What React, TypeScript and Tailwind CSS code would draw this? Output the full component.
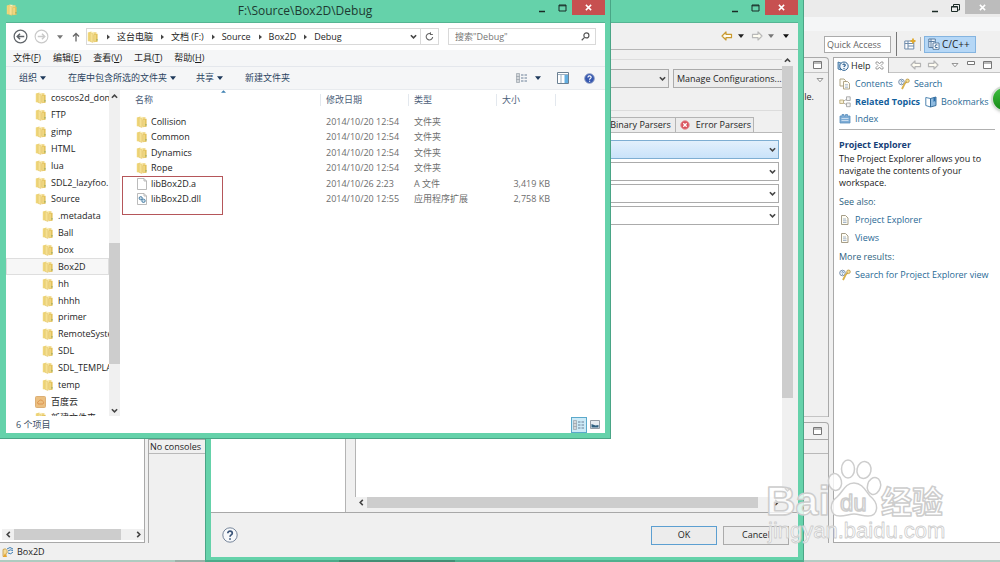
import type { ReactNode } from 'react';
import clsx from 'clsx';

type TreeItem = { name: string; level: 0 | 1; kind?: 'cloud' };
type FileRow = { name: string; date: string; type: string; size?: string; kind: 'folder' | 'file' | 'dll' };

const tree: TreeItem[] = [
  { name: 'coscos2d_don', level: 0 },
  { name: 'FTP', level: 0 },
  { name: 'gimp', level: 0 },
  { name: 'HTML', level: 0 },
  { name: 'lua', level: 0 },
  { name: 'SDL2_lazyfoo.', level: 0 },
  { name: 'Source', level: 0 },
  { name: '.metadata', level: 1 },
  { name: 'Ball', level: 1 },
  { name: 'box', level: 1 },
  { name: 'Box2D', level: 1 },
  { name: 'hh', level: 1 },
  { name: 'hhhh', level: 1 },
  { name: 'primer', level: 1 },
  { name: 'RemoteSyste', level: 1 },
  { name: 'SDL', level: 1 },
  { name: 'SDL_TEMPLA', level: 1 },
  { name: 'temp', level: 1 },
  { name: '百度云', level: 0, kind: 'cloud' },
  { name: '新建文件夹', level: 0 },
];

const files: FileRow[] = [
  { name: 'Collision', date: '2014/10/20 12:54', type: '文件夹', kind: 'folder' },
  { name: 'Common', date: '2014/10/20 12:54', type: '文件夹', kind: 'folder' },
  { name: 'Dynamics', date: '2014/10/20 12:54', type: '文件夹', kind: 'folder' },
  { name: 'Rope', date: '2014/10/20 12:54', type: '文件夹', kind: 'folder' },
  { name: 'libBox2D.a', date: '2014/10/26 2:23', type: 'A 文件', size: '3,419 KB', kind: 'file' },
  { name: 'libBox2D.dll', date: '2014/10/20 12:55', type: '应用程序扩展', size: '2,758 KB', kind: 'dll' },
];

const menus = [
  ['文件', 'F'],
  ['编辑', 'E'],
  ['查看', 'V'],
  ['工具', 'T'],
  ['帮助', 'H'],
];

const crumbs = ['这台电脑', '文档 (F:)', 'Source', 'Box2D', 'Debug'];

/* ---------- icons ---------- */

const Folder = () => (
  <svg viewBox="0 0 12 12" className="h-3 w-3 shrink-0">
    <path d="M.8 1.500L4.500.5v10L.8 10.300z" fill="#f0d67a" />
    <path d="M3.500.8h3.200v9.700H3.500z" fill="#fdf3c0" />
    <path d="M6.500 1.200h3v9H6.500z" fill="#efd580" />
    <path d="M3.200 1.500L5.800 2.500v9L3.200 10.500z" fill="#f6e093" stroke="#d8b950" strokeWidth=".4" />
    <path d="M6.500 3.500L10.600 2.800v8L6.500 11.300z" fill="#e3c25c" />
    <path d="M7.300 4l1.500-.3v6.800l-1.500.2z" fill="#f2dc8c" />
    <path d="M10 8v1.500" stroke="#7fa56a" strokeWidth=".9" />
  </svg>
);

const CloudFolder = () => (
  <svg viewBox="0 0 12 12" className="h-3 w-3 shrink-0">
    <rect x=".5" y=".5" width="10" height="11" rx="1" fill="#ebbf80" stroke="#dcaf75" />
    <path d="M3 8a2 2 0 0 1 1-3 2 2 0 0 1 3.500 0A1.800 1.800 0 0 1 8 8z" fill="none" stroke="#d98c45" strokeWidth=".8" />
  </svg>
);

const Sheet = ({ gears }: { gears?: boolean }) => (
  <svg viewBox="0 0 12 12" className="h-3 w-3 shrink-0">
    <path d="M1.500.5h6.500l2.500 2.500v8.500h-9z" fill="#fff" stroke="#a9a9a9" strokeWidth=".8" />
    <path d="M8 .5v2.500h2.500" fill="none" stroke="#a9a9a9" strokeWidth=".8" />
    {gears && (
      <g fill="#c7dcea" stroke="#4b7fa5" strokeWidth="1">
        <circle cx="4.700" cy="5.200" r="1.600" />
        <circle cx="7.500" cy="7.800" r="1.700" />
      </g>
    )}
  </svg>
);

const Triangle = ({ className }: { className?: string }) => (
  <svg viewBox="0 0 8 5" className={clsx('h-[4px] w-[6px] shrink-0', className)}>
    <path d="M0 0h8L4 5z" fill="currentColor" />
  </svg>
);

const OpenTriangle = () => (
  <svg viewBox="0 0 9 6" className="h-[5px] w-2 shrink-0">
    <path d="M1 .5h7L4.500 4.500z" fill="#fff" stroke="#777" />
  </svg>
);

const Chevron = ({ dir }: { dir: 'up' | 'down' | 'left' | 'right' }) => (
  <svg viewBox="0 0 8 8" className="h-[7px] w-[7px] shrink-0" fill="none" stroke="#444" strokeWidth="1.800">
    {dir === 'up' && <path d="M1 5.500l3-3 3 3" />}
    {dir === 'down' && <path d="M1 2.500l3 3 3-3" />}
    {dir === 'left' && <path d="M5.500 1l-3 3 3 3" />}
    {dir === 'right' && <path d="M2.500 1l3 3-3 3" />}
  </svg>
);

const BlockArrow = ({ color, flip }: { color: string; flip?: boolean }) => (
  <svg viewBox="0 0 12 10" className={clsx('h-[10px] w-3 shrink-0', flip && '-scale-x-100')}>
    <path d="M1 5l4-4v2.300h5.500v3.400H5V9z" fill="#fffdf2" stroke={color} strokeWidth="1.200" strokeLinejoin="round" />
  </svg>
);

const Maximize = () => (
  <svg viewBox="0 0 9 8" className="h-2 w-[9px] shrink-0">
    <path d="M.5.5h8v7h-8zM.5 2h8" fill="#fff" stroke="#777" />
  </svg>
);

const Docs = () => (
  <svg viewBox="0 0 12 12" className="h-3 w-3 shrink-0" fill="#fffdf4" stroke="#a89c7c" strokeWidth=".9">
    <path d="M1 1h4l1.500 1.500V8H1z" />
    <path d="M4.500 3.500h4l2 2V11h-6z" />
    <path d="M6 6.500h3M6 8h3M6 9.500h3" stroke="#8fa5c0" strokeWidth=".6" />
  </svg>
);

const Page = () => (
  <svg viewBox="0 0 12 12" className="h-3 w-3 shrink-0" fill="#fffdf4" stroke="#9c937a" strokeWidth=".9">
    <path d="M2.500 1.500h4l2.500 2.500v6.500H2.500z" />
    <path d="M4 5h3M4 6.800h3.500M4 8.500h3.500" stroke="#8fa5c0" strokeWidth=".8" />
  </svg>
);

const SearchHelp = () => (
  <svg viewBox="0 0 12 12" className="h-3 w-3 shrink-0">
    <circle cx="3.500" cy="4" r="2.800" fill="#eef4fa" stroke="#7f95ad" />
    <path d="M2.600 3.200q.9-1.200 1.800 0L3.500 4.400M3.500 5.200v.7" stroke="#3f6f9f" fill="none" strokeWidth=".8" />
    <path d="M10.500 1.500L6.500 6 4 11" fill="none" stroke="#d9b04a" strokeWidth="1.800" />
    <circle cx="9.500" cy="2.800" r="1.800" fill="#f4dd93" stroke="#b08a35" strokeWidth=".7" />
  </svg>
);

const Related = () => (
  <svg viewBox="0 0 12 12" className="h-3 w-3 shrink-0" strokeWidth=".8">
    <path d="M4 5.500L8 3M4 6.500L8 9" stroke="#999" />
    <path d="M.8 4h3.700v3.500H.8z" fill="#f6edd0" stroke="#b5a473" />
    <path d="M7.500.8h3.700v3.700H7.500zM7.500 7h3.700v3.700H7.500z" fill="#f3f3f3" stroke="#9c9c9c" />
  </svg>
);

const Book = () => (
  <svg viewBox="0 0 12 12" className="h-3 w-3 shrink-0" strokeWidth=".9">
    <path d="M.8 1.500L5.500 2.500v8.500L.8 9.500z" fill="#fff" stroke="#3c78a8" />
    <path d="M5.500 2.500L11 1v8.500L5.500 11z" fill="#8fbbe0" stroke="#2f6695" />
    <path d="M8.500 1.500v4.500l1-1 1 1V1.200" fill="#2d6ea8" />
  </svg>
);

const IndexIcon = () => (
  <svg viewBox="0 0 12 12" className="h-3 w-3 shrink-0">
    <path d="M1 3h2V1.500h2V3h1.500V1.500h2V3H11v7H1z" fill="#7fadd6" stroke="#5c8fbc" strokeWidth=".8" />
    <path d="M2.500 5.500h7M2.500 7.500h7" stroke="#dbe9f5" strokeWidth=".8" />
  </svg>
);

const HelpBadge = () => (
  <svg viewBox="0 0 12 12" className="h-3 w-3 shrink-0">
    <path d="M1 2l3 1v7L1 9z" fill="#9fc0dd" stroke="#376c9b" strokeWidth=".8" />
    <circle cx="7" cy="6.200" r="4.200" fill="#f1f6fb" stroke="#2f6494" />
    <path d="M5.700 5q1.300-2 2.600 0c0 1-1.300.9-1.300 2M7 8v.9" fill="none" stroke="#22588a" strokeWidth="1.100" />
  </svg>
);

const Details = () => (
  <svg viewBox="0 0 12 10" className="h-[10px] w-3 shrink-0">
    <path d="M.5.500h3v9h-3z" fill="#d2d6da" stroke="#9aa2aa" strokeWidth=".7" />
    <path d="M.5 3.500h3M.5 6.500h3" stroke="#8c959e" strokeWidth=".6" />
    <path d="M5 2h2.500M8.500 2H11M5 5h2.500M8.500 5H11M5 8h2.500M8.500 8H11" stroke="#6a7f96" />
  </svg>
);

/* ---------- shared pieces ---------- */

const Scrollbar = ({ vertical, thumb, className }: { vertical?: boolean; thumb: string; className?: string }) => (
  <div className={clsx('flex shrink-0 bg-[#f0f0f0]', vertical ? 'w-[11px] flex-col' : 'h-[11px]', className)}>
    <button
      aria-label={vertical ? 'Up' : 'Left'}
      className={clsx('flex shrink-0 items-center justify-center', vertical ? 'h-3' : 'w-3')}
    >
      <Chevron dir={vertical ? 'up' : 'left'} />
    </button>
    <div className="relative min-h-0 flex-1">
      <div className={clsx('absolute bg-[#cdcdcd]', thumb)} />
    </div>
    <button
      aria-label={vertical ? 'Down' : 'Right'}
      className={clsx('flex shrink-0 items-center justify-center', vertical ? 'h-3' : 'w-3')}
    >
      <Chevron dir={vertical ? 'down' : 'right'} />
    </button>
  </div>
);

const WindowButtons = ({ restore, muted }: { restore?: boolean; muted?: boolean }) => (
  <div className="flex shrink-0 items-start">
    <button aria-label="Minimize" className="flex h-[18px] w-5 items-center justify-center">
      <svg viewBox="0 0 8 8" className="h-2 w-2">
        <path d="M1 6.500h6" stroke="#1b2b26" strokeWidth="1.500" />
      </svg>
    </button>
    <button aria-label="Maximize" className="flex h-4 w-5 items-center justify-center">
      <svg viewBox="0 0 9 8" className="h-2 w-[9px]" fill="none" stroke="#1b2b26">
        {restore ? <path d="M.5 2.500h6v5h-6zM.5 3h6M2.500 2V.500h6V6H7" /> : <path d="M1 1h7v6H1zM1 1.800h7" />}
      </svg>
    </button>
    <button
      aria-label="Close"
      className={clsx('flex items-center justify-center', muted ? 'h-[14px] w-[35px] bg-[#bcbcbc]' : 'h-[15px] w-[33px] bg-[#c75050]')}
    >
      <svg viewBox="0 0 8 8" className="h-[7px] w-[7px]">
        <path d="M1 1l6 6M7 1L1 7" stroke="#fff" strokeWidth="1.700" />
      </svg>
    </button>
  </div>
);

const HelpLink = ({ icon, bold, children }: { icon: ReactNode; bold?: boolean; children: string }) => (
  <a href="#" className={clsx('flex items-center gap-1 whitespace-nowrap text-[#2a6a96]', bold && 'font-bold text-[#14609c]')}>
    {icon}
    {children}
  </a>
);

/* ---------- file explorer window ---------- */

const ExplorerWindow = () => (
  <section className="absolute left-0 top-0 flex h-[439px] w-[611px] flex-col border-b border-r border-[#4aa586] bg-[#65d2aa] pb-[5px] pl-[6px] pr-[5px] text-[9px] leading-3 text-[#1e1e1e]">
    <header className="flex h-[22px] shrink-0 items-start">
      <span className="pt-1">
        <Folder />
      </span>
      <h1 className="flex-1 pl-[60px] pt-[3px] text-center text-[12px] leading-4 text-[#1d3a31]">F:\Source\Box2D\Debug</h1>
      <WindowButtons />
    </header>

    <div className="flex min-h-0 flex-1 flex-col border-t border-[#55b593] bg-white">
      <div className="flex h-[27px] shrink-0 items-center pl-[7px] pr-[9px]">
        <button aria-label="Back">
          <svg viewBox="0 0 16 16" className="h-[15px] w-[15px]" fill="none" stroke="#5f6469" strokeWidth="1.300">
            <circle cx="8" cy="8" r="6.800" />
            <path d="M12 8H4.500M7.500 5l-3 3 3 3" strokeWidth="1.600" />
          </svg>
        </button>
        <button aria-label="Forward" className="ml-[6px]">
          <svg viewBox="0 0 16 16" className="h-[15px] w-[15px]" fill="none" stroke="#c9c9c9" strokeWidth="1.200">
            <circle cx="8" cy="8" r="6.800" />
            <path d="M4 8h7.500M8.500 5l3 3-3 3" strokeWidth="1.500" />
          </svg>
        </button>
        <button aria-label="Recent" className="ml-2">
          <Triangle className="text-[#777]" />
        </button>
        <button aria-label="Up" className="ml-2">
          <svg viewBox="0 0 10 10" className="h-[10px] w-[10px]" fill="none" stroke="#666" strokeWidth="1.300">
            <path d="M5 9.500V1.500M2 4.500l3-3 3 3" />
          </svg>
        </button>
        <div className="ml-[5px] flex h-[17px] min-w-0 flex-1 items-center border border-[#d9d9d9]">
          <Folder />
          {crumbs.map((c) => (
            <span key={c} className="flex items-center">
              <svg viewBox="0 0 18 8" className="h-2 w-[18px]">
                <path d="M8 1.500v5L11 4z" fill="#444" />
              </svg>
              <a href="#" className="whitespace-nowrap">{c}</a>
            </span>
          ))}
          <button aria-label="History" className="ml-auto mr-[3px]">
            <Chevron dir="down" />
          </button>
          <button aria-label="Refresh" className="flex h-full w-[18px] items-center justify-center border-l border-[#d9d9d9]">
            <svg viewBox="0 0 10 10" className="h-[9px] w-[9px]" fill="none" stroke="#666" strokeWidth="1.200">
              <path d="M8.500 5.500A3.600 3.600 0 1 1 6.500 2M6 .300v2.500h2.700" />
            </svg>
          </button>
        </div>
        <label className="ml-[9px] flex h-[17px] w-[148px] items-center border border-[#d9d9d9] pl-[6px] pr-[5px]">
          <input aria-label="搜索" placeholder={'搜索"Debug"'} className="min-w-0 flex-1 outline-none placeholder:text-[#757575]" />
          <svg viewBox="0 0 10 10" className="h-[9px] w-[9px]" fill="none" stroke="#555" strokeWidth="1.300">
            <circle cx="6" cy="3.800" r="2.800" />
            <path d="M4 6L.8 9.200" />
          </svg>
        </label>
      </div>

      <nav className="flex h-[17px] shrink-0 items-center gap-3 border-b border-[#e4e7ec] bg-[#f5f6f7] pl-[7px]">
        {menus.map(([label, key]) => (
          <button key={key}>
            {label}(<u>{key}</u>)
          </button>
        ))}
      </nav>

      <div className="flex h-[23px] shrink-0 items-center border-b border-[#e8ebee] bg-[#f5f6f7] pl-[13px] pr-[10px] text-[#2a4360]">
        <button className="mr-[22px] flex items-center gap-[3px]">组织 <Triangle className="text-[#1e395b]" /></button>
        <button className="mr-5 flex items-center gap-[3px]">在库中包含所选的文件夹 <Triangle className="text-[#1e395b]" /></button>
        <button className="mr-[22px] flex items-center gap-[3px]">共享 <Triangle className="text-[#1e395b]" /></button>
        <button>新建文件夹</button>
        <button aria-label="View" className="ml-auto flex items-center gap-[7px]">
          <Details />
          <Triangle className="text-[#1e395b]" />
        </button>
        <button aria-label="Preview pane" className="ml-4">
          <svg viewBox="0 0 12 12" className="h-3 w-3">
            <path d="M.500.500h11v11H.500z" fill="#fff" stroke="#6b8092" />
            <path d="M1 2.500h10M4 3v8" stroke="#9db0c0" />
            <path d="M7.500 3H11v8H7.500z" fill="#62aee0" />
          </svg>
        </button>
        <button aria-label="Help" className="ml-[15px]">
          <svg viewBox="0 0 12 12" className="h-[11px] w-[11px]">
            <circle cx="6" cy="6" r="5.300" fill="#3658b0" stroke="#8f9fc4" />
            <path d="M4.300 4.800c0-2.200 3.500-2.200 3.500-.1 0 1.200-1.700 1.200-1.700 2.600M6.100 8.400v1.200" fill="none" stroke="#fff" strokeWidth="1.300" />
          </svg>
        </button>
      </div>

      <div className="flex min-h-0 flex-1">
        <div className="w-[103px] shrink-0 overflow-hidden">
          <ul className="flex h-[337px] flex-col">
            {tree.map((t) => (
              <li
                key={t.name}
                className={clsx(
                  'flex flex-1 items-center gap-1 whitespace-nowrap border',
                  t.level === 0 ? 'pl-[28px]' : 'pl-[35px]',
                  t.name === 'Box2D' ? 'border-[#dedede] bg-[#f7f7f7]' : 'border-transparent'
                )}
              >
                {t.kind === 'cloud' ? <CloudFolder /> : <Folder />}
                {t.name}
              </li>
            ))}
          </ul>
        </div>
        <Scrollbar vertical thumb="top-[141px] h-[121px] w-full" />

        <div className="relative min-w-0 flex-1">
          <table className="block">
            <thead className="block h-[24px] text-[#4c607a]">
              <tr className="flex h-[16px] items-end">
                <th className="relative w-[201px] border-r border-[#e3e8ee] pl-[15px] text-left font-normal">
                  名称
                  <svg viewBox="0 0 8 4" className="absolute -top-1 right-[94px] h-[3px] w-[5px]">
                    <path d="M0 4l4-4 4 4z" fill="#3c7fb1" />
                  </svg>
                </th>
                <th className="w-[88px] border-r border-[#e3e8ee] pl-[5px] text-left font-normal">修改日期</th>
                <th className="w-[88px] border-r border-[#e3e8ee] pl-[5px] text-left font-normal">类型</th>
                <th className="w-[59px] border-r border-[#e3e8ee] pl-[5px] text-left font-normal">大小</th>
              </tr>
            </thead>
            <tbody className="grid h-[93px] grid-rows-6">
              {files.map((f) => (
                <tr key={f.name} className="flex items-center text-[#6d6d6d]">
                  <td className="flex w-[201px] items-center gap-[3px] pl-4 text-[#1e1e1e]">
                    {f.kind === 'folder' ? <Folder /> : <Sheet gears={f.kind === 'dll'} />}
                    {f.name}
                  </td>
                  <td className="w-[88px] whitespace-nowrap pl-[5px]">{f.date}</td>
                  <td className="w-[88px] pl-[5px]">{f.type}</td>
                  <td className="w-[53px] text-right">{f.size}</td>
                </tr>
              ))}
            </tbody>
          </table>
          {/* highlight round the two built libraries */}
          <div className="absolute left-[2px] top-[86px] h-[39px] w-[101px] border border-[#b5565a]" />
        </div>
      </div>

      <footer className="flex h-[17px] shrink-0 items-center pl-[10px] pr-[5px] text-[#3c4f66]">
        <span>6 个项目</span>
        <button aria-label="Details" className="ml-auto flex h-4 w-4 items-center justify-center border border-[#5ba9cb] bg-[#cdeaf7]">
          <Details />
        </button>
        <button aria-label="Thumbnails" className="ml-[3px]">
          <svg viewBox="0 0 10 9" className="h-[9px] w-[10px]">
            <path d="M.500.500h9v8h-9z" fill="#e7edf2" stroke="#939ca5" />
            <path d="M1.500 4l4 1.500 3-.5v2.500h-7z" fill="#2d5f80" />
          </svg>
        </button>
      </footer>
    </div>
  </section>
);

/* ---------- project properties dialog ---------- */

const Combo = ({ label, active }: { label: string; active?: boolean }) => (
  <div className="relative flex">
    <select
      aria-label={label}
      className={clsx(
        'h-[19px] w-full appearance-none border outline-none',
        active ? 'border-[#7eaed2] bg-linear-to-b from-[#e3f0fc] to-[#c9e3fa]' : 'border-[#ababab] bg-white'
      )}
    />
    <span className="pointer-events-none absolute inset-y-0 right-[3px] flex items-center">
      <Chevron dir="down" />
    </span>
  </div>
);

const PropertiesDialog = () => (
  <section className="absolute bottom-0 left-[205px] right-[196px] top-0 flex flex-col border-x border-[#4aa586] bg-[#65d2aa] px-[5px] pb-[5px] text-[9px] leading-3 text-[#1e1e1e]">
    <header className="flex h-[22px] shrink-0 justify-end">
      <WindowButtons />
    </header>

    <div className="flex min-h-0 flex-1 flex-col border-t border-[#55b593] bg-[#f0f0f0]">
      <div className="flex min-h-0 flex-1">
        <aside className="w-[135px] shrink-0 border-r border-[#b4b4b4] bg-white" />
        <div className="flex min-w-0 flex-1 flex-col">
          <div className="flex h-[27px] shrink-0 items-center justify-end border-b border-[#b4b4b4] pr-[9px]">
            <button aria-label="Back"><BlockArrow color="#c8992f" /></button>
            <button aria-label="Back list" className="ml-[5px]"><Triangle className="text-[#222]" /></button>
            <button aria-label="Forward" className="ml-[7px]"><BlockArrow color="#b9b9b9" flip /></button>
            <button aria-label="Forward list" className="ml-[5px]"><Triangle className="text-[#777]" /></button>
            <button aria-label="Menu" className="ml-[9px]"><Triangle className="text-[#111]" /></button>
          </div>

          <div className="flex min-h-0 flex-1 pl-[9px] pt-1">
            <div className="flex min-w-0 flex-1 flex-col">
              <div className="mt-[5px] flex h-[52px] shrink-0 flex-col border-y border-[#dcdcdc] pt-[9px]">
                <div className="flex justify-end gap-1 overflow-hidden">
                  <div className="relative w-[180px]">
                    <select aria-label="Configuration" className="h-[19px] w-full appearance-none border border-[#ababab] bg-[#ececec]" />
                    <span className="pointer-events-none absolute inset-y-0 right-[3px] flex items-center">
                      <Chevron dir="down" />
                    </span>
                  </div>
                  <button className="h-[19px] w-[109px] shrink-0 overflow-hidden whitespace-nowrap border border-r-0 border-[#ababab] bg-[#ececec] pl-[3px] text-left">
                    Manage Configurations...
                  </button>
                </div>
              </div>
              <div className="mt-[6px] flex h-[16px] shrink-0 justify-end border-b border-[#b9b9b9] pr-7">
                <button className="flex items-center border border-b-0 border-[#b4b4b4] bg-[#ececec] px-1">Binary Parsers</button>
                <button className="flex items-center gap-[6px] border border-b-0 border-l-0 border-[#b4b4b4] bg-[#ececec] pl-1 pr-[2px]">
                  <svg viewBox="0 0 10 10" className="h-[10px] w-[10px]">
                    <circle cx="5" cy="5" r="4.300" fill="#d9505c" stroke="#e89aa0" />
                    <path d="M3.300 3.300l3.400 3.400M6.700 3.300L3.300 6.700" stroke="#fff" strokeWidth="1.300" />
                  </svg>
                  Error Parsers
                </button>
              </div>
              <div className="flex min-h-0 flex-1 flex-col gap-[3px] border-l border-[#b4b4b4] bg-white pr-[3px] pt-[7px]">
                <Combo label="Binary parser" active />
                <Combo label="Indexer" />
                <Combo label="Scanner" />
                <Combo label="Builder" />
              </div>
              <Scrollbar thumb="left-0 right-[12px] h-full" />
            </div>
            <Scrollbar vertical thumb="top-0 h-[332px] w-full" className="mb-[13px] mr-[5px]" />
          </div>
          <div className="h-[4px] shrink-0" />
        </div>
      </div>

      <footer className="flex h-[45px] shrink-0 items-center border-t border-[#a8a8a8] pl-[11px] pr-[9px]">
        <button aria-label="Help" className="mr-auto">
          <svg viewBox="0 0 16 16" className="h-4 w-4">
            <circle cx="8" cy="8" r="7.200" fill="#f7f9fb" stroke="#77869b" />
            <path d="M5.800 6.300c0-3 4.500-2.700 4.500-.1C10.300 8 8 7.800 8 9.800M8 11.200v1.600" fill="none" stroke="#3a5478" strokeWidth="1.700" />
          </svg>
        </button>
        <button className="h-[19px] w-[66px] border border-[#5c9fd1] bg-[#ececec]">OK</button>
        <button className="ml-[6px] h-[19px] w-[66px] border border-[#ababab] bg-[#ececec]">Cancel</button>
      </footer>
    </div>
  </section>
);

/* ---------- Eclipse main window ---------- */

const HelpView = () => (
  <aside className="flex w-[167px] shrink-0 flex-col border-l border-t border-[#a9a9a9]">
    <div className="flex h-[15px] shrink-0 items-center bg-[#f0f0f0]">
      <div className="flex h-full items-center gap-[2px] border-r border-[#a9a9a9] bg-white pl-[3px] pr-1 text-[9px]">
        <HelpBadge />
        <span>Help</span>
        <svg viewBox="0 0 9 9" className="ml-[3px] h-[9px] w-[9px]">
          <path d="M1 1h2l1.500 2L6 1h2v1.500L6 4.500l2 2V8H6L4.500 6 3 8H1V6.500l2-2-2-2z" fill="#fff" stroke="#888" strokeWidth=".8" />
        </svg>
      </div>
      <div className="flex h-full flex-1 items-center justify-end border-b border-[#c4c4c4] pr-2">
        <BlockArrow color="#b5b5b5" />
        <span className="ml-[5px] mr-3 flex"><BlockArrow color="#b5b5b5" flip /></span>
        <OpenTriangle />
        <svg viewBox="0 0 8 4" className="mx-[8px] mb-1 h-1 w-2">
          <path d="M.500.500h7v3h-7z" fill="#fff" stroke="#777" />
        </svg>
        <Maximize />
      </div>
    </div>
    <div className="min-h-0 flex-1 overflow-hidden border-b border-[#a9a9a9] bg-white pl-[5px] pt-[2px] text-[9px] leading-3">
      <div className="mr-[5px] border-b border-[#b0b0b0] pb-[2px]">
        <div className="flex h-[18px] items-center gap-[5px]">
          <HelpLink icon={<Docs />}>Contents</HelpLink>
          <HelpLink icon={<SearchHelp />}>Search</HelpLink>
        </div>
        <div className="flex h-[18px] items-center gap-[5px]">
          <HelpLink icon={<Related />} bold>Related Topics</HelpLink>
          <HelpLink icon={<Book />}>Bookmarks</HelpLink>
        </div>
        <div className="flex h-4 items-center">
          <HelpLink icon={<IndexIcon />}>Index</HelpLink>
        </div>
      </div>
      <h2 className="mt-[9px] font-bold text-[#173f78]">Project Explorer</h2>
      <p className="mt-[2px] w-[152px] text-[#1a1a1a]">The Project Explorer allows you to navigate the contents of your workspace.</p>
      <p className="mt-[7px] text-[#2d5f80]">See also:</p>
      <ul>
        <li className="flex h-[18px] items-end"><HelpLink icon={<Page />}>Project Explorer</HelpLink></li>
        <li className="flex h-[18px] items-end"><HelpLink icon={<Page />}>Views</HelpLink></li>
      </ul>
      <p className="mt-[7px] text-[#2d5f80]">More results:</p>
      <div className="flex h-[18px] items-end">
        <HelpLink icon={<SearchHelp />}>Search for Project Explorer view</HelpLink>
      </div>
    </div>
  </aside>
);

const EclipseWindow = () => (
  <main className="flex h-full flex-col text-[9px] leading-3 text-[#1e1e1e]">
    <header className="flex h-[17px] shrink-0 justify-end bg-[#ebebeb]">
      <WindowButtons restore muted />
    </header>
    <div className="h-[14px] shrink-0 bg-[#f5f6f7]" />
    <div className="flex h-[26px] shrink-0 items-center justify-end pr-6">
      <input
        aria-label="Quick Access"
        placeholder="Quick Access"
        className="h-[17px] w-[67px] border border-[#ababab] bg-white pl-[2px] outline-none placeholder:text-[#666]"
      />
      <span className="ml-[5px] h-6 w-px bg-[#777]" />
      <button aria-label="Open Perspective" className="ml-[7px]">
        <svg viewBox="0 0 12 12" className="h-3 w-3">
          <path d="M.800 3h9v8h-9zM.800 5.500h9M4 3v8M4 8h6" fill="#fff" stroke="#6e8bab" />
          <path d="M9 .500v5M6.500 3h5" stroke="#e0a92e" strokeWidth="1.800" />
        </svg>
      </button>
      <span className="ml-1 h-[14px] w-px bg-[#b4b4b4]" />
      <button className="ml-[3px] flex h-[17px] w-[52px] items-center gap-[2px] border border-[#84b4e0] bg-[#b5d7f6] pl-[3px] text-[10px]">
        <svg viewBox="0 0 12 12" className="h-3 w-3 shrink-0">
          <path d="M.800 1h6.500v8.500H.800zM.800 3.500h6M3 1v8" fill="#f0f6fc" stroke="#5b7da1" />
          <path d="M5 5h6v6.300H5z" fill="#fff" stroke="#5b7da1" />
          <path d="M9.500 7q-2.500-1-2.500 1.200T9.500 9.500" fill="none" stroke="#2c5e92" />
        </svg>
        C/C++
      </button>
    </div>

    <div className="flex min-h-0 flex-1 gap-[3px]">
      <div className="flex w-[145px] shrink-0 flex-col border-b border-r border-[#a9a9a9] bg-white pb-[2px]">
        <div className="flex-1" />
        <Scrollbar thumb="left-0 h-full w-[107px]" className="ml-[2px]" />
      </div>

      <div className="flex min-w-0 flex-1 flex-col gap-[5px] pr-[1px]">
        <div className="flex flex-1 flex-col rounded-tr border-r border-t border-[#a9a9a9]">
          <div className="flex h-[15px] items-center justify-end border-b border-[#c4c4c4] pr-[6px]"><Maximize /></div>
          <div className="flex h-[15px] items-center justify-end pr-1"><OpenTriangle /></div>
          <p className="mt-[3px] pr-[14px] text-right">le.</p>
          <div className="flex-1 border-b border-[#c4c4c4]" />
        </div>
        <div className="flex h-[121px] shrink-0 flex-col rounded-tr border-l border-r border-t border-[#a9a9a9]">
          <div className="flex h-[17px] items-center justify-end border-b border-[#a9a9a9] pr-[6px]"><Maximize /></div>
          <p className="flex h-[14px] items-center border-b border-[#b9b9b9] pl-[1px]">No consoles</p>
        </div>
      </div>

      <HelpView />
    </div>

    <footer className="flex h-[19px] shrink-0 items-center gap-[3px] pb-[2px] pl-[2px]">
      <svg viewBox="0 0 12 12" className="h-3 w-3">
        <path d="M1 3.500q3-2 4 1t-1 3v3H1z" fill="#f5dc9b" stroke="#c09a48" strokeWidth=".8" />
        <path d="M5 3q3-3 6 0M6 5q2-2 5-.5M6 7q3 2 5-1" fill="none" stroke="#3d7db3" />
        <path d="M1 11l2-3.500L5 11z" fill="#e7a52f" />
      </svg>
      <span>Box2D</span>
    </footer>
  </main>
);

const Watermark = () => (
  <svg viewBox="0 0 190 95" className="pointer-events-none absolute bottom-[12px] right-[50px] h-[95px] w-[190px]">
    <g
      fill="#ffffff"
      fillOpacity=".8"
      stroke="#cdcdcd"
      strokeWidth="1.500"
      strokeLinejoin="round"
      fontFamily="'Liberation Sans', 'Noto Sans CJK SC', sans-serif"
    >
      <ellipse cx="88" cy="14" rx="6.500" ry="9" />
      <ellipse cx="104" cy="15" rx="7" ry="8.500" transform="rotate(12 104 15)" />
      <ellipse cx="75" cy="27" rx="6.500" ry="8.500" transform="rotate(-12 75 27)" />
      <ellipse cx="114" cy="31" rx="6.500" ry="8.500" transform="rotate(16 114 31)" />
      <path d="M94 28c8 0 11 7 16 13 10 8 8 20-2 20-6 0-9-2-14-2s-8 2-14 2c-11 0-11-13-3-19 6-5 8-14 17-14z" />
      <text x="6" y="60" fontSize="41" fontWeight="700">Bai</text>
      <text x="80" y="56" fontSize="24">du</text>
      <text x="121" y="58" fontSize="31" fontWeight="700">经验</text>
      <text x="8" y="83" fontSize="22" strokeWidth=".8">jingyan.baidu.com</text>
    </g>
  </svg>
);

export default function App() {
  return (
    <div className="relative h-screen w-full overflow-hidden bg-[#f0f0f0] font-['Open_Sans','Noto_Sans_CJK_SC',sans-serif]">
      <EclipseWindow />
      <PropertiesDialog />
      <ExplorerWindow />
      <div className="absolute right-[-17px] top-[86px] h-[26px] w-[26px] rounded-full border-2 border-[#d5dcd5] bg-linear-to-b from-[#3fbf3f] to-[#148a14] shadow" />
      {/* top edge of the taskbar */}
      <div className="absolute inset-x-0 bottom-0 flex h-[2px]">
        <span className="w-[175px] bg-[#aecbc0]" />
        <span className="w-[30px] bg-[#9cb0a8]" />
        <span className="w-[134px] bg-[#4cab8a]" />
        <span className="w-[116px] bg-[#438f75]" />
        <span className="w-[349px] bg-[#50b08e]" />
        <span className="flex-1 bg-[#b4cbc3]" />
      </div>
      <Watermark />
    </div>
  );
}
